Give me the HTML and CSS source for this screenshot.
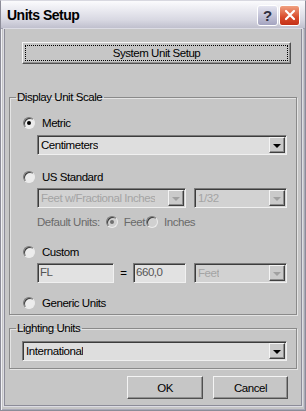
FILE: index.html
```html
<!DOCTYPE html>
<html lang="en">
<head>
  <meta charset="UTF-8" />
  <title>Units Setup</title>
  <link rel="stylesheet" href="styles.css">
</head>
<body>
  <div class="window">
    <div class="titlebar">
      <span class="title">Units Setup</span>
      <div class="caption-buttons">
        <span class="cap-btn help">?</span>
        <span class="cap-btn close">
          <svg width="12" height="12" viewBox="0 0 12 12"><path d="M2 2 L10 10 M10 2 L2 10" stroke="#fff" stroke-width="2.2" stroke-linecap="round"/></svg>
        </span>
      </div>
    </div>

    <div class="client">
      <button class="btn wide focused"><span>System Unit Setup</span></button>

      <fieldset class="group scale">
        <legend>Display Unit Scale</legend>

        <div class="row radio-row first">
          <span class="radio checked"></span><span>Metric</span>
        </div>
        <div class="combo indent">
          <span class="value">Centimeters</span><span class="arrow"></span>
        </div>

        <div class="row radio-row us">
          <span class="radio"></span><span>US Standard</span>
        </div>
        <div class="row indent fields-a">
          <div class="combo disabled feet-inch">
            <span class="value">Feet w/Fractional Inches</span><span class="arrow"></span>
          </div>
          <div class="combo disabled fraction">
            <span class="value">1/32</span><span class="arrow"></span>
          </div>
        </div>
        <div class="row indent default-units disabled-text">
          <span>Default Units:</span>
          <span class="radio checked dim"></span><span class="opt-label">Feet</span>
          <span class="radio dim"></span><span>Inches</span>
        </div>

        <div class="row radio-row custom">
          <span class="radio"></span><span>Custom</span>
        </div>
        <div class="row indent fields-b">
          <div class="edit name">FL</div>
          <span class="equals">=</span>
          <div class="edit amount">660,0</div>
          <div class="combo disabled unit">
            <span class="value">Feet</span><span class="arrow"></span>
          </div>
        </div>

        <div class="row radio-row generic">
          <span class="radio"></span><span>Generic Units</span>
        </div>
      </fieldset>

      <fieldset class="group lighting">
        <legend>Lighting Units</legend>
        <div class="combo">
          <span class="value">International</span><span class="arrow"></span>
        </div>
      </fieldset>

      <div class="actions">
        <button class="btn ok">OK</button>
        <button class="btn cancel">Cancel</button>
      </div>
    </div>
  </div>
</body>
</html>
```

FILE: styles.css
```css
body {
  margin: 0;
  background: #c6c6c6;
  font-family: "Liberation Sans", Arial, sans-serif;
  font-size: 11.5px;
  letter-spacing: -0.45px;
  color: #000;
}

.window {
  width: 306px;
  height: 411px;
  box-sizing: border-box;
  border: 1px solid #8c8c98;
  border-top-color: #d8d8e0;
  box-shadow: inset 1px 0 0 #f0f0f4, inset -1px -1px 0 #a8a8b8;
  display: flex;
  flex-direction: column;
  background: #c6c6c6;
}

.titlebar {
  height: 27px;
  display: flex;
  align-items: center;
  justify-content: space-between;
  padding: 0 5px 0 6px;
  background: linear-gradient(#fbfbfd 0%, #ececf2 30%, #d8d8e2 70%, #c0c0ce 100%);
  border-bottom: 1px solid #a0a0b0;
}

.title {
  font-family: "Liberation Sans", Arial, sans-serif;
  font-weight: bold;
  font-size: 14px;
  letter-spacing: -0.5px;
  color: #000;
  padding-top: 1px;
}

.caption-buttons {
  display: flex;
  gap: 1px;
  padding-top: 1px;
}

.cap-btn {
  width: 21px;
  height: 21px;
  border: 1px solid #fff;
  border-radius: 3px;
  display: flex;
  align-items: center;
  justify-content: center;
  box-sizing: border-box;
}

.help {
  background: linear-gradient(#e4e4f0, #a4a4c0);
  color: #303040;
  font-size: 15px;
  font-weight: bold;
  letter-spacing: 0;
}

.close {
  background: linear-gradient(#f0a080, #d84a2a 60%, #c43018);
}

.client {
  flex: 1;
  margin: 0 3px 4px 3px;
  padding: 0;
  border: 1px solid #8c8c98;
  border-top: none;
  box-shadow: 0 0 0 1px #dcdce4;
  display: flex;
  flex-direction: column;
}

.btn {
  font-family: inherit;
  font-size: 11.5px;
  letter-spacing: -0.45px;
  color: #000;
  background: #c6c6c6;
  border: 1px solid;
  border-color: #f4f4f4 #505050 #505050 #f4f4f4;
  box-shadow: inset -1px -1px 0 #909090;
  padding: 0;
  height: 23px;
}

.btn.wide {
  margin: 13px 10px 0 17px;
  height: 22px;
  padding: 2px;
}

.btn.focused span {
  display: flex;
  align-items: center;
  justify-content: center;
  height: 100%;
  border: 1px dotted #000;
  box-sizing: border-box;
}

.group {
  margin: 0 4px 0 4px;
  padding: 0 0 4px 0;
  border: 1px solid #8a8a8a;
  box-shadow: 1px 1px 0 #e4e4e4, inset 1px 1px 0 #e4e4e4;
}

.group legend {
  margin-left: 6px;
  padding: 0 2px 0 1px;
  line-height: 14px;
}

.scale {
  margin-top: 26px;
}

.lighting {
  margin-top: 6px;
  padding-bottom: 7px;
}

.lighting .combo {
  margin: 6px 9px 0 12px;
}

.row {
  display: flex;
  align-items: center;
}

.radio-row {
  height: 14px;
  margin-left: 13px;
  gap: 7px;
}

.radio-row.first { margin-top: 12px; }
.radio-row.us { margin-top: 15px; }
.radio-row.custom { margin-top: 16px; }
.radio-row.generic { margin-top: 13px; }

.radio {
  width: 12px;
  height: 12px;
  flex: none;
  border-radius: 50%;
  box-sizing: border-box;
  border: 1px solid;
  border-color: #7a7a7a #ececec #ececec #7a7a7a;
  background: #ececec;
  box-shadow: inset 1px 1px 0 #3c3c3c;
  display: flex;
  align-items: center;
  justify-content: center;
}

.radio.checked::after {
  content: "";
  width: 4px;
  height: 4px;
  border-radius: 50%;
  background: #000;
}

.radio.dim {
  background: #d0d0d0;
}

.radio.dim.checked::after {
  background: #707070;
}

.indent {
  margin-left: 27px;
  margin-right: 9px;
}

.combo {
  height: 20px;
  box-sizing: border-box;
  display: flex;
  align-items: center;
  justify-content: space-between;
  background: #dedede;
  border: 1px solid;
  border-color: #7a7a7a #f0f0f0 #f0f0f0 #7a7a7a;
  box-shadow: inset 1px 1px 0 #3c3c3c;
}

.combo.indent {
  margin-top: 5px;
}

.combo .value {
  padding-left: 3px;
  white-space: nowrap;
  overflow: hidden;
}

.arrow {
  width: 16px;
  height: 16px;
  flex: none;
  margin-right: 1px;
  box-sizing: border-box;
  background: #cacaca;
  border: 1px solid;
  border-color: #f4f4f4 #404040 #404040 #f4f4f4;
  box-shadow: inset -1px -1px 0 #8c8c8c;
  display: flex;
  align-items: center;
  justify-content: center;
}

.arrow::after {
  content: "";
  border-left: 4px solid transparent;
  border-right: 4px solid transparent;
  border-top: 4px solid #000;
  margin-top: 1px;
}

.combo.disabled {
  background: #d2d2d2;
  color: #a4a4a4;
}

.combo.disabled .arrow::after {
  border-top-color: #a0a0a0;
}

.fields-a {
  margin-top: 4px;
  gap: 8px;
}

.feet-inch { width: 149px; }
.fraction { flex: 1; }

.default-units {
  margin-top: 7px;
  height: 14px;
  gap: 6px;
}

.default-units .opt-label {
  margin-right: -5px;
}

.disabled-text {
  color: #6a6a6a;
}

.default-units .radio:first-of-type {
  margin-left: 3px;
}

.fields-b {
  margin-top: 4px;
}

.edit {
  height: 20px;
  box-sizing: border-box;
  background: #e2e2e2;
  border: 1px solid;
  border-color: #7a7a7a #f0f0f0 #f0f0f0 #7a7a7a;
  box-shadow: inset 1px 1px 0 #3c3c3c;
  color: #555;
  padding: 2px 0 0 2px;
}

.edit.name { width: 77px; }
.edit.amount { width: 53px; }

.equals {
  width: 19px;
  text-align: center;
}

.unit {
  flex: 1;
  margin-left: 8px;
}

.actions {
  display: flex;
  justify-content: flex-end;
  gap: 10px;
  margin: 7px 13px 0 0;
}

.btn.ok { width: 76px; }
.btn.cancel { width: 75px; }
```
